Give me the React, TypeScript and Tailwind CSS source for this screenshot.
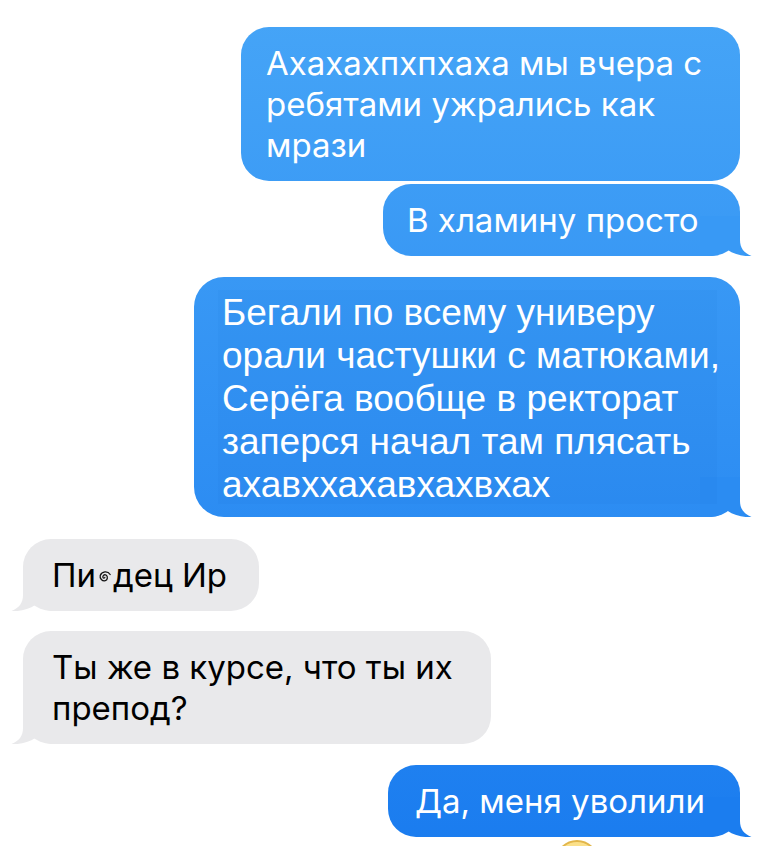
import React from "react";

const blueBg =
  "bg-linear-to-b from-[#46a5f7] to-[#1a7cef] bg-fixed";

function TailRight({ color }: { color: string }) {
  return (
    <svg
      className="absolute right-[-12px] bottom-0"
      width="52"
      height="40"
      viewBox="0 0 52 40"
    >
      <path
        d="M0 0 H40 V24 C40 32 44 37 51.5 40 C44 40.6 35 39 27 33.5 C22 37.5 16 40 8 40 H0 Z"
        fill={color}
      />
    </svg>
  );
}

function TailLeft({ color }: { color: string }) {
  return (
    <svg
      className="absolute left-[-12px] bottom-0 -scale-x-100"
      width="52"
      height="40"
      viewBox="0 0 52 40"
    >
      <path
        d="M0 0 H40 V24 C40 32 44 37 51.5 40 C44 40.6 35 39 27 33.5 C22 37.5 16 40 8 40 H0 Z"
        fill={color}
      />
    </svg>
  );
}

function Spiral() {
  return (
    <svg
      width="15"
      height="15"
      viewBox="0 0 13 13"
      className="inline-block align-[2px] mx-[1px]"
    >
      <path
        d="M6.8 6.4 a0.9 0.9 0 0 1 -1.6 0.2 a1.8 1.8 0 0 1 2.6 -2.2 a2.8 2.8 0 0 1 -0.6 4.9 a3.8 3.8 0 0 1 -4.4 -4.6 a4.8 4.8 0 0 1 8.6 -0.8"
        fill="none"
        stroke="#111"
        strokeWidth="1.1"
        strokeLinecap="round"
      />
    </svg>
  );
}

export default function App() {
  const sf = "font-['Inter','Noto_Sans',sans-serif]";
  return (
    <div className="w-[763px] h-[846px] overflow-hidden bg-white px-[23px] pt-[27px] flex flex-col">
      {/* 1 */}
      <div className="flex justify-end">
        <div
          className={`${blueBg} ${sf} w-[499px] rounded-[28px] pl-[25px] pr-[10px] pt-[16px] pb-[15px] text-white text-[33px] leading-[41px] whitespace-nowrap`}
        >
          Ахахахпхпхаха мы вчера с<br />
          ребятами ужрались как<br />
          мрази
        </div>
      </div>
      {/* 2 */}
      <div className="flex justify-end mt-[3px]">
        <div
          className={`${blueBg} ${sf} relative w-[357px] rounded-[28px] pl-[24px] pt-[16px] pb-[15px] text-white text-[33px] leading-[41px] whitespace-nowrap`}
        >
          <TailRight color="#3899f5" />
          <span className="relative">В хламину просто</span>
        </div>
      </div>
      {/* 3 */}
      <div className="flex justify-end mt-[21px]">
        <div
          className={`${blueBg} relative w-[546px] h-[240px] rounded-[30px] text-white whitespace-nowrap`}
        >
          <TailRight color="#2b8cf2" />
          <div className="absolute left-[24px] top-[13px] w-[499px] h-[214px] bg-[#0b5fd0]/[0.06]" />
          <div className="relative pl-[28px] pt-[14px] font-['Liberation_Sans','Arial',sans-serif] text-[37px] leading-[43px]">
            Бегали по всему универу
            <br />
            орали частушки с матюками,
            <br />
            Серёга вообще в ректорат
            <br />
            заперся начал там плясать
            <br />
            ахавххахавхахвхах
          </div>
        </div>
      </div>
      {/* 4 */}
      <div className="flex justify-start mt-[22px]">
        <div
          className={`${sf} relative w-[236px] rounded-[28px] bg-[#e9e9eb] pl-[29px] pt-[16px] pb-[15px] text-black text-[33px] leading-[41px] whitespace-nowrap`}
        >
          <TailLeft color="#e9e9eb" />
          <span className="relative">
            Пи
            <Spiral />
            дец Ир
          </span>
        </div>
      </div>
      {/* 5 */}
      <div className="flex justify-start mt-[20px]">
        <div
          className={`${sf} relative w-[468px] rounded-[28px] bg-[#e9e9eb] pl-[29px] pt-[16px] pb-[15px] text-black text-[33px] leading-[41px] whitespace-nowrap`}
        >
          <TailLeft color="#e9e9eb" />
          <span className="relative">
            Ты же в курсе, что ты их
            <br />
            препод?
          </span>
        </div>
      </div>
      {/* 6 */}
      <div className="flex justify-end mt-[21px]">
        <div
          className={`${blueBg} ${sf} relative w-[352px] rounded-[28px] pl-[27px] pt-[16px] pb-[15px] text-white text-[33px] leading-[41px] whitespace-nowrap`}
        >
          <TailRight color="#1b7def" />
          <span className="relative">Да, меня уволили</span>
        </div>
      </div>
      {/* partially visible emoji below */}
      <div className="flex pl-[532px] mt-[3px] shrink-0">
        <div className="w-[44px] h-[44px] shrink-0 rounded-full border-[2px] border-[#e2b64a] bg-[#fbe08a]" />
      </div>
    </div>
  );
}
